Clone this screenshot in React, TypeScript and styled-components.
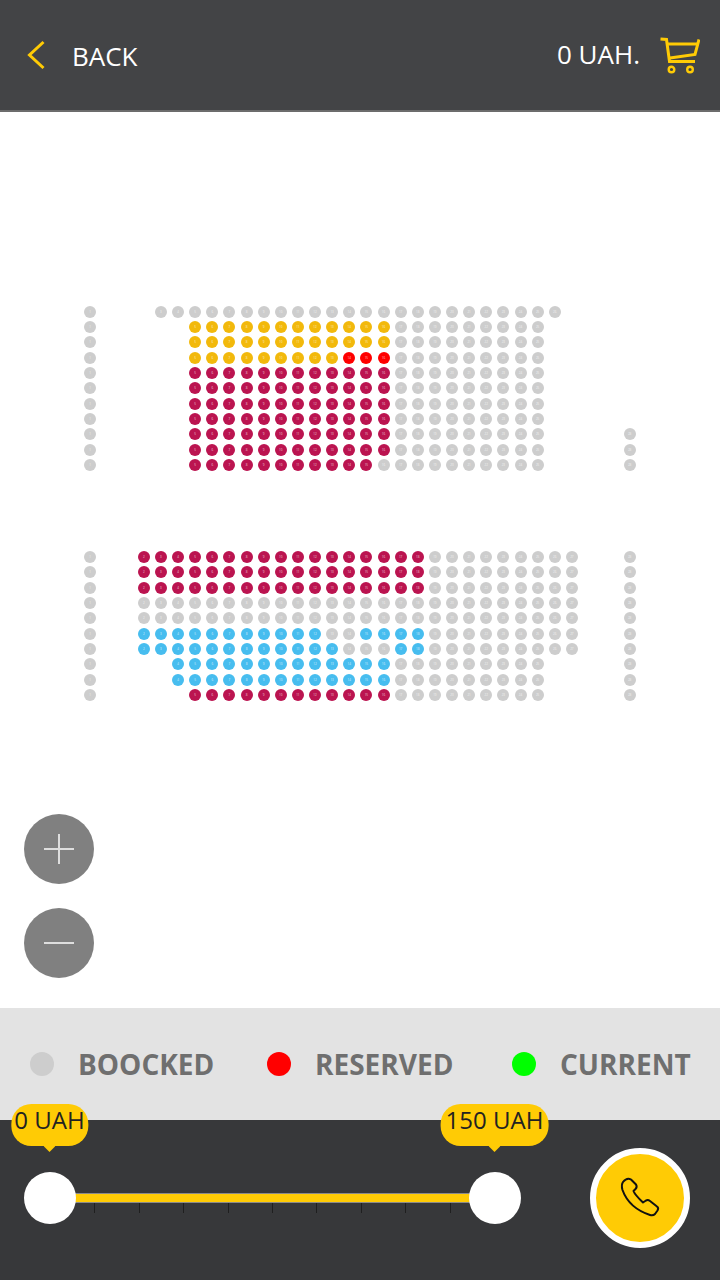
import styled, { createGlobalStyle } from "styled-components";

const COLORS: Record<string, string> = {
  g: "#cdcdcd",
  y: "#f2b90c",
  m: "#bb1450",
  r: "#ff0000",
  b: "#47bdef",
};

const PITCH = 17.13;

type RowData = { left: string; cells: string; right: string };

// "3. 12y 9g 2." => 3 empty places, 12 yellow, 9 grey, 2 empty
const row = (runs: string, right = ".", left = "g"): RowData => ({
  left,
  right,
  cells: runs
    .split(" ")
    .map((r) => r.slice(-1).repeat(parseInt(r, 10)))
    .join(""),
});

const upperBlock: RowData[] = [
  row("1. 24g 1."),
  row("3. 12y 9g 2."),
  row("3. 12y 9g 2."),
  row("3. 9y 3r 9g 2."),
  row("3. 12m 9g 2."),
  row("3. 12m 9g 2."),
  row("3. 12m 9g 2."),
  row("3. 12m 9g 2."),
  row("3. 12m 9g 2.", "g"),
  row("3. 12m 9g 2.", "g"),
  row("3. 11m 10g 2.", "g"),
];

const lowerBlock: RowData[] = [
  row("17m 9g", "g"),
  row("17m 9g", "g"),
  row("17m 9g", "g"),
  row("26g", "g"),
  row("26g", "g"),
  row("11b 2g 4b 9g", "g"),
  row("12b 3g 2b 9g", "g"),
  row("2. 13b 9g 2.", "g"),
  row("2. 13b 9g 2.", "g"),
  row("3. 12m 9g 2.", "g"),
];

function SeatSlot({ kind, num }: { kind: string; num: number }) {
  return (
    <Slot>
      {kind !== "." && <Seat $color={COLORS[kind]}>{num}</Seat>}
    </Slot>
  );
}

function SeatBlock({ rows }: { rows: RowData[] }) {
  return (
    <Block>
      {rows.map((r, i) => (
        <SeatRow key={i}>
          <SeatSlot kind={r.left} num={1} />
          <LeftAisle />
          {r.cells.split("").map((c, j) => (
            <SeatSlot key={j} kind={c} num={j + 2} />
          ))}
          <RightAisle />
          <SeatSlot kind={r.right} num={r.cells.length + 2} />
        </SeatRow>
      ))}
    </Block>
  );
}

function CartIcon() {
  return (
    <svg width="40" height="38" viewBox="0 0 40 38" fill="none" stroke="#ffcb05" strokeWidth="3">
      <path d="M0.5 3 L6.5 3.5 L9.5 25.5 L35 25.5" />
      <path d="M7 8 L38.5 8" />
      <path d="M39 3.5 L35 18.5 L10 22" />
      <circle cx="11.5" cy="33.5" r="2.8" strokeWidth="2.4" />
      <circle cx="30" cy="33.5" r="2.8" strokeWidth="2.4" />
    </svg>
  );
}

function PhoneIcon() {
  return (
    <svg width="60" height="60" viewBox="0 0 60 60" fill="none" stroke="#111" strokeWidth="2" strokeLinejoin="round">
      <path d="M13 14 Q17 9 21 11.5 L26 16.5 Q27.5 19 25.5 21 L23.5 23 Q25 27 33 34.5 L36 32.5 Q38 31.5 40 33 L47 38.5 Q49 40 47.5 42.5 L45 46 Q43 48 40 47 Q19 40 12.5 22 Q11 17 13 14 Z" />
    </svg>
  );
}

export default function App() {
  return (
    <Page>
      <GlobalStyle />
      <Header>
        <BackLink>
          <svg width="18" height="30" viewBox="0 0 18 30" fill="none" stroke="#ffcb05" strokeWidth="3">
            <path d="M16.5 2 L2.5 15 L16.5 28" />
          </svg>
          <BackText>BACK</BackText>
        </BackLink>
        <CartLink>
          <TotalText>0 UAH.</TotalText>
          <CartIcon />
        </CartLink>
      </Header>

      <MapArea>
        <SeatBlock rows={upperBlock} />
        <SeatBlock rows={lowerBlock} />
        <ZoomButtons>
          <ZoomButton>
            <svg width="30" height="30" viewBox="0 0 30 30" stroke="#dedede" strokeWidth="2">
              <path d="M0 15 H30 M15 0 V30" />
            </svg>
          </ZoomButton>
          <ZoomButton>
            <svg width="30" height="30" viewBox="0 0 30 30" stroke="#dedede" strokeWidth="2">
              <path d="M0 15 H30" />
            </svg>
          </ZoomButton>
        </ZoomButtons>
      </MapArea>

      <Legend>
        <LegendItem>
          <LegendDot $color="#cdcdcd" />
          BOOCKED
        </LegendItem>
        <LegendItem>
          <LegendDot $color="#ff0000" />
          RESERVED
        </LegendItem>
        <LegendItem>
          <LegendDot $color="#00ff00" />
          CURRENT
        </LegendItem>
      </Legend>

      <Footer>
        <Slider>
          <Track />
          <Ticks>
            {Array.from({ length: 11 }).map((_, i) => (
              <Tick key={i} />
            ))}
          </Ticks>
          <Thumb $side="left">
            <Bubble $pad={3.5}>0 UAH</Bubble>
          </Thumb>
          <Thumb $side="right">
            <Bubble $pad={5.5}>150 UAH</Bubble>
          </Thumb>
        </Slider>
        <CallButton>
          <PhoneIcon />
        </CallButton>
      </Footer>
    </Page>
  );
}

const GlobalStyle = createGlobalStyle`
  body {
    margin: 0;
    background: #fff;
    font-family: "Open Sans", "Liberation Sans", sans-serif;
  }
`;

const Page = styled.div`
  width: 720px;
  height: 1280px;
  display: flex;
  flex-direction: column;
  overflow: hidden;
`;

const Header = styled.header`
  height: 110px;
  flex: none;
  display: flex;
  align-items: center;
  justify-content: space-between;
  padding: 0 20px 0 27px;
  background: #434446;
  border-bottom: 2px solid #6c6c6c;
`;

const BackLink = styled.div`
  display: flex;
  align-items: center;
  gap: 27px;
`;

const CartLink = styled.div`
  display: flex;
  align-items: center;
  gap: 20px;
`;

const BackText = styled.span`
  color: #fff;
  font-size: 26px;
  margin-top: 2px;
`;

const TotalText = styled.span`
  color: #fff;
  font-size: 26px;
  margin-bottom: 2px;
`;

const MapArea = styled.main`
  flex: 1;
  display: flex;
  flex-direction: column;
  padding: 192px 0 30px 81.6px;
  background: #fff;
`;

const Block = styled.div`
  display: flex;
  flex-direction: column;

  & + & {
    margin-top: 76.6px;
  }
`;

const SeatRow = styled.div`
  display: flex;
  height: 15.35px;
`;

const Slot = styled.div`
  flex: 0 0 ${PITCH}px;
  display: flex;
  align-items: center;
  justify-content: center;
`;

const LeftAisle = styled.div`
  flex: 0 0 36.47px;
`;

const RightAisle = styled.div`
  flex: 0 0 40.6px;
`;

const Seat = styled.div<{ $color: string }>`
  flex: none;
  width: 12px;
  height: 12px;
  border-radius: 50%;
  background: ${({ $color }) => $color};
  color: rgba(255, 255, 255, 0.75);
  font-size: 3px;
  line-height: 12px;
  text-align: center;
`;

const ZoomButtons = styled.div`
  margin-top: auto;
  margin-left: -57.6px;
  display: flex;
  flex-direction: column;
  gap: 24px;
`;

const ZoomButton = styled.div`
  width: 70px;
  height: 70px;
  border-radius: 50%;
  background: #808080;
  display: flex;
  align-items: center;
  justify-content: center;
`;

const Legend = styled.section`
  height: 112px;
  flex: none;
  box-sizing: border-box;
  padding: 0 0 1px 30px;
  display: grid;
  grid-template-columns: 237px 245px 1fr;
  align-items: center;
  background: #e3e3e3;
`;

const LegendItem = styled.div`
  display: flex;
  align-items: center;
  gap: 24px;
  color: #6f6f6f;
  font-size: 28px;
  font-weight: 700;
  line-height: 38px;
`;

const LegendDot = styled.span<{ $color: string }>`
  flex: none;
  width: 24px;
  height: 24px;
  border-radius: 50%;
  background: ${({ $color }) => $color};
`;

const Footer = styled.footer`
  height: 160px;
  flex: none;
  box-sizing: border-box;
  padding: 0 30px 4px 24px;
  display: flex;
  align-items: center;
  justify-content: space-between;
  background: #37383a;
`;

const Slider = styled.div`
  position: relative;
  width: 497px;
  height: 52px;
  display: flex;
  flex-direction: column;
  justify-content: center;
  padding: 0 26px;
  box-sizing: border-box;
`;

const Track = styled.div`
  height: 10px;
  box-sizing: border-box;
  margin-top: 10px;
  background: #ffcb05;
  border-top: 1px solid #8a8a8a;
  border-bottom: 1px solid #8a8a8a;
`;

const Ticks = styled.div`
  display: flex;
  justify-content: space-between;
  height: 10px;
`;

const Tick = styled.span`
  width: 1px;
  height: 10px;
  background: #1f1f1f;
`;

const Thumb = styled.div<{ $side: "left" | "right" }>`
  position: absolute;
  top: 0;
  ${({ $side }) => $side}: 0;
  width: 52px;
  height: 52px;
  border-radius: 50%;
  background: #fff;
`;

const Bubble = styled.div<{ $pad: number }>`
  position: absolute;
  left: calc(50% - 0.5px);
  bottom: 78px;
  transform: translateX(-50%);
  height: 42px;
  padding: 0 ${({ $pad }) => $pad}px;
  border-radius: 20px;
  background: #ffcb05;
  color: #222;
  font-size: 24px;
  line-height: 32px;
  white-space: nowrap;

  &::after {
    content: "";
    position: absolute;
    left: 50%;
    bottom: -6px;
    width: 12px;
    height: 12px;
    margin-left: -6px;
    background: #ffcb05;
    clip-path: polygon(0 50%, 100% 50%, 50% 100%);
  }
`;

const CallButton = styled.div`
  width: 100px;
  height: 100px;
  box-sizing: border-box;
  border: 6px solid #fff;
  border-radius: 50%;
  background: #ffcb05;
  display: flex;
  align-items: center;
  justify-content: center;
`;
